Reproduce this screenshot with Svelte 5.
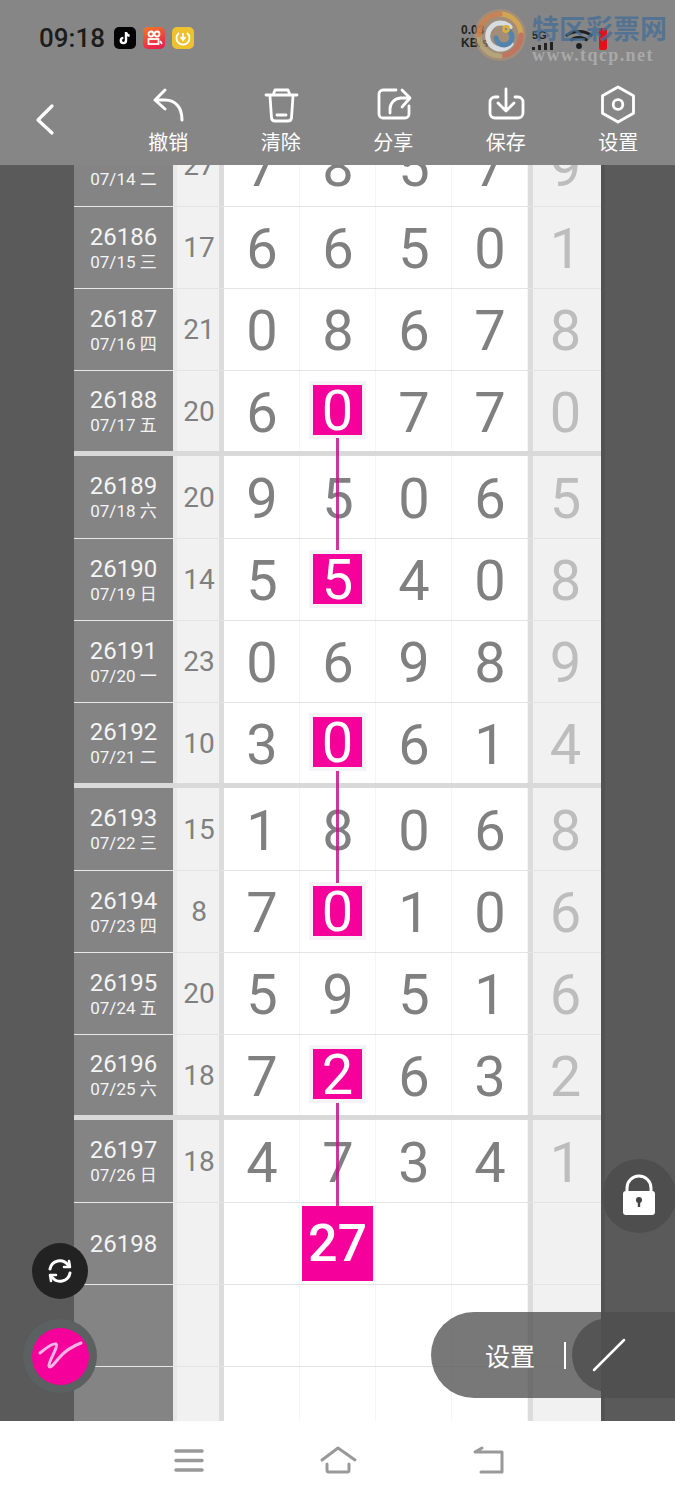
<script>
  const rows = [
    { id: '26185', date: '07/14 二', sum: '27', nums: [7, 8, 5, 7], last: 9, kind: 'first' },
    { id: '26186', date: '07/15 三', sum: '17', nums: [6, 6, 5, 0], last: 1 },
    { id: '26187', date: '07/16 四', sum: '21', nums: [0, 8, 6, 7], last: 8 },
    { id: '26188', date: '07/17 五', sum: '20', nums: [6, 0, 7, 7], last: 0, hit: true, kind: 'end' },
    { id: '26189', date: '07/18 六', sum: '20', nums: [9, 5, 0, 6], last: 5, kind: 'first' },
    { id: '26190', date: '07/19 日', sum: '14', nums: [5, 5, 4, 0], last: 8, hit: true },
    { id: '26191', date: '07/20 一', sum: '23', nums: [0, 6, 9, 8], last: 9 },
    { id: '26192', date: '07/21 二', sum: '10', nums: [3, 0, 6, 1], last: 4, hit: true, kind: 'end' },
    { id: '26193', date: '07/22 三', sum: '15', nums: [1, 8, 0, 6], last: 8, kind: 'first' },
    { id: '26194', date: '07/23 四', sum: '8', nums: [7, 0, 1, 0], last: 6, hit: true },
    { id: '26195', date: '07/24 五', sum: '20', nums: [5, 9, 5, 1], last: 6 },
    { id: '26196', date: '07/25 六', sum: '18', nums: [7, 2, 6, 3], last: 2, hit: true, kind: 'end' },
    { id: '26197', date: '07/26 日', sum: '18', nums: [4, 7, 3, 4], last: 1, kind: 'first' },
    { id: '26198', date: '', sum: '', nums: ['', '27', '', ''], last: '', big: true },
    { id: '', date: '', sum: '', nums: ['', '', '', ''], last: '' },
    { id: '', date: '', sum: '', nums: ['', '', '', ''], last: '' }
  ];
</script>

<div class="page">
  <header class="header">
    <div class="status">
      <span class="time">09:18</span>
      <span class="app tiktok">
        <svg width="16" height="16" viewBox="0 0 16 16" fill="none" stroke="#fff" stroke-width="2.400">
          <path d="M9 2v8.500a2.600 2.600 0 1 1-2.600-2.600M9 2.500c.4 2 1.700 3 3.600 3.200" />
        </svg>
      </span>
      <span class="app video">
        <svg width="18" height="18" viewBox="0 0 18 18" fill="none" stroke="#fff" stroke-width="1.800">
          <circle cx="6" cy="5" r="2.500" /><circle cx="12" cy="5" r="2.500" />
          <rect x="3.500" y="10" width="10" height="5" /><path d="M15 12l2 3" />
        </svg>
      </span>
      <span class="app clock">
        <svg width="18" height="18" viewBox="0 0 18 18" fill="none" stroke="#fff" stroke-width="1.800">
          <path d="M5 4a6.500 6.500 0 1 0 8 0M9 4v6M6.500 8 9 11l2.500-3" />
        </svg>
      </span>
      <div class="net">
        <span class="speed">0.03<br />KB/s</span>
        <span class="mobile">
          <span class="fiveg">5G</span>
          <svg width="28" height="8" viewBox="0 0 28 8" fill="#222">
            <rect x="0" y="5" width="3" height="3" /><rect x="6" y="3" width="3" height="5" />
            <rect x="12" y="1" width="3" height="7" /><rect x="18" y="0" width="3" height="8" />
          </svg>
        </span>
        <svg class="wifi" width="30" height="22" viewBox="0 0 30 22" fill="#1e1e1e" stroke="#1e1e1e" stroke-width="2.800">
          <path d="M2 8c7-6 19-6 26 0M6.500 12.500c5-4 12-4 17 0" fill="none" />
          <circle cx="15" cy="18" r="1.500" />
        </svg>
        <span class="battery"></span>
      </div>
    </div>

    <div class="toolbar">
      <button class="back" aria-label="返回">
        <svg width="24" height="36" viewBox="0 0 24 36" fill="none" stroke="#fff" stroke-width="3.200" stroke-linecap="round" stroke-linejoin="round">
          <path d="M19 4 5 18l14 13" />
        </svg>
      </button>
      <div class="tool">
        <svg width="44" height="44" viewBox="146 83 44 44" fill="none" stroke="#fff" stroke-width="3" stroke-linecap="round" stroke-linejoin="round">
          <path d="M165 90l-10 10 10 9M155 100h10c11 0 17 8 17 20" />
        </svg>
        <span>撤销</span>
      </div>
      <div class="tool">
        <svg width="44" height="44" viewBox="259 83 44 44" fill="none" stroke="#fff" stroke-width="2.800" stroke-linecap="round" stroke-linejoin="round">
          <path d="M266 95h31M273 95l2-5h13l2 5M270 96l1.500 22a3.500 3.500 0 0 0 3.500 3h13a3.500 3.500 0 0 0 3.500-3L293 96M277 115h9" />
        </svg>
        <span>清除</span>
      </div>
      <div class="tool">
        <svg width="44" height="44" viewBox="371 83 44 44" fill="none" stroke="#fff" stroke-width="2.800" stroke-linecap="round" stroke-linejoin="round">
          <path d="M396 90h-13a4 4 0 0 0-4 4v20a4 4 0 0 0 4 4h22a4 4 0 0 0 4-4v-8M390 113v-4c0-6 5-11 11-11h9M402 90l8 8-8 9" />
        </svg>
        <span>分享</span>
      </div>
      <div class="tool">
        <svg width="44" height="44" viewBox="484 83 44 44" fill="none" stroke="#fff" stroke-width="2.800" stroke-linecap="round" stroke-linejoin="round">
          <path d="M498 97h-3a5 5 0 0 0-5 5v11a5 5 0 0 0 5 5h23a5 5 0 0 0 5-5v-11a5 5 0 0 0-5-5h-3M506 89v21M498 103l8 8 8-8" />
        </svg>
        <span>保存</span>
      </div>
      <div class="tool">
        <svg width="44" height="44" viewBox="596 83 44 44" fill="none" stroke="#fff" stroke-width="2.800" stroke-linejoin="round">
          <path d="M618 87l15.500 8.800v17.500L618 122l-15.500-8.700V95.800z" />
          <circle cx="618" cy="104.500" r="4.800" />
        </svg>
        <span>设置</span>
      </div>
    </div>

    <div class="watermark">
      <span class="logo">
        <svg width="52" height="52" viewBox="0 0 52 52" fill="none" stroke-width="5" stroke-linecap="round">
          <path d="M26 5a21 21 0 0 1 21 21" stroke="#d9a94f" />
          <path d="M47 26a21 21 0 0 1-21 21" stroke="#c9735c" />
          <path d="M26 47A21 21 0 0 1 5 26" stroke="#b9a878" />
          <path d="M5 26A21 21 0 0 1 26 5" stroke="#cf8250" />
          <path d="M36 18a13 13 0 1 0 1 17" stroke="#dfe6ea" />
          <path d="M30 20a8 8 0 1 1-8 9" stroke="#4e84b0" />
          <circle cx="32" cy="20" r="1.500" stroke="#e2b33a" />
        </svg>
      </span>
      <div class="brand">
        <span class="brand-name">特区彩票网</span>
        <span class="brand-url">www.tqcp.net</span>
      </div>
    </div>
  </header>

  <main class="main">
    <div class="side side-left"></div>
    <div class="table">
      <div class="rows">
        {#each rows as row}
          <div class="row {row.kind ?? ''}">
            <div class="date-cell">
              {#if row.id}<span class="issue">{row.id}</span>{/if}
              {#if row.date}<span class="date">{row.date}</span>{/if}
            </div>
            <div class="gutter"></div>
            <div class="sum">{row.sum}</div>
            <div class="divider"></div>
            {#each row.nums as n, i}
              <div class="num">
                {#if row.big && i === 1}
                  <span class="big">{n}</span>
                {:else if row.hit && i === 1}
                  <span class="hit">{n}</span>
                {:else}
                  {n}
                {/if}
              </div>
            {/each}
            <div class="divider"></div>
            <div class="last">{row.last}</div>
          </div>
        {/each}
      </div>
      <svg class="links" width="527" height="1256" viewBox="74 165 527 1256" stroke="#c6128f" stroke-width="3" opacity="0.85">
        <line x1="337.500" y1="438" x2="337.500" y2="550" />
        <line x1="337.500" y1="771" x2="337.500" y2="883" />
        <line x1="337.500" y1="1103" x2="337.500" y2="1206" />
      </svg>
    </div>
    <div class="side side-right"></div>
  </main>

  <footer class="nav">
    <svg width="40" height="40" viewBox="167 1441 40 40" fill="none" stroke="#999" stroke-width="3.500" stroke-linecap="round">
      <path d="M175 1451h26M175 1460.500h26M175 1470h26" />
    </svg>
    <svg width="40" height="40" viewBox="317 1441 40 40" fill="none" stroke="#999" stroke-width="3" stroke-linecap="round" stroke-linejoin="round">
      <path d="M321 1460l16-12 17 12M326 1464v6a2 2 0 0 0 2 2h18a2 2 0 0 0 2-2v-6" />
    </svg>
    <svg width="40" height="40" viewBox="467 1441 40 40" fill="none" stroke="#999" stroke-width="3" stroke-linecap="round" stroke-linejoin="round">
      <path d="M474 1452h27v20h-21M474 1452l7-4" />
    </svg>
  </footer>

  <button class="float refresh" aria-label="刷新">
    <svg width="34" height="34" viewBox="0 0 34 34" fill="none" stroke="#fff" stroke-width="3" stroke-linecap="round" stroke-linejoin="round">
      <path d="M7 15a10 10 0 0 1 18-4M27 19a10 10 0 0 1-18 4" />
      <path d="M21 13h6l-1-6 M13 21H7l1 6" stroke-width="2.500" />
    </svg>
  </button>
  <button class="float pen" aria-label="画笔">
    <span class="pen-dot">
      <svg width="57" height="57" viewBox="0 0 57 57" fill="none" stroke="#f8b4e4" stroke-width="3" stroke-linecap="round" stroke-linejoin="round">
        <path d="M8 25c6-5 13-10 16-9 3 2-8 18-7 22 1 3 5-2 10-8 5-6 14-12 22-15" />
      </svg>
    </span>
  </button>
  <button class="float lock" aria-label="锁定">
    <svg width="40" height="46" viewBox="0 0 40 46">
      <path d="M8 20v-5a12 12 0 0 1 24 0v5" fill="none" stroke="#fff" stroke-width="3" />
      <rect x="4" y="18" width="32" height="24" rx="3" fill="#fff" />
      <circle cx="20" cy="27" r="3" fill="#444" />
      <rect x="18.800" y="27" width="2.400" height="7" fill="#444" />
    </svg>
  </button>
  <div class="float pill">
    <span class="pill-label">设置</span>
    <span class="pill-bar"></span>
    <span class="pill-knob">
      <svg width="36" height="36" viewBox="0 0 36 36" stroke="#fff" stroke-width="2.500" stroke-linecap="round">
        <line x1="3" y1="33" x2="33" y2="3" />
      </svg>
    </span>
  </div>
</div>

<style>
  :global(body) {
    margin: 0;
    background: #fff;
  }

  .page {
    position: relative;
    width: 675px;
    height: 1500px;
    display: flex;
    flex-direction: column;
    overflow: hidden;
    font-family: Roboto, "Noto Sans CJK SC", sans-serif;
  }

  /* header */
  .header {
    position: relative;
    flex: 0 0 165px;
    background: #868686;
  }

  .status {
    height: 75px;
    display: flex;
    align-items: center;
    padding-left: 39px;
    box-sizing: border-box;
  }

  .time {
    font-size: 26px;
    font-weight: 500;
    color: #1c1c1c;
    width: 75px;
  }

  .app {
    width: 22px;
    height: 22px;
    border-radius: 5px;
    margin-right: 7px;
    display: flex;
    align-items: center;
    justify-content: center;
  }

  .tiktok { background: #050505; }
  .video { background: linear-gradient(160deg, #ef7a2a, #ea1450); }
  .clock { background: #eec22e; }

  .net {
    position: absolute;
    left: 461px;
    top: 24px;
    width: 146px;
    height: 26px;
    display: flex;
    align-items: flex-end;
    font-family: "Liberation Sans", sans-serif;
    color: #222;
  }

  .speed {
    width: 71px;
    font-size: 12px;
    font-weight: 700;
    line-height: 13px;
  }

  .mobile {
    width: 32px;
    display: flex;
    flex-direction: column;
    gap: 1px;
  }

  .fiveg {
    font-size: 11px;
    font-weight: 700;
    line-height: 12px;
  }

  .wifi { margin-right: 5px; }

  .battery {
    width: 8px;
    height: 22px;
    background: #e3121a;
    border-radius: 2px;
  }

  .toolbar {
    height: 90px;
    display: flex;
  }

  .back {
    width: 112px;
    padding: 27px 0 0 33px;
    border: 0;
    background: none;
    text-align: left;
    box-sizing: border-box;
    align-self: flex-start;
  }

  .tool {
    width: 112.500px;
    padding-top: 8px;
    box-sizing: border-box;
    display: flex;
    flex-direction: column;
    align-items: center;
    color: #fff;
    font-size: 20px;
    line-height: 24px;
  }

  .tool span { margin-top: 4px; }

  .watermark {
    position: absolute;
    left: 474px;
    top: 9px;
    display: flex;
    align-items: flex-start;
    gap: 6px;
  }

  .logo {
    width: 52px;
    height: 52px;
    border-radius: 50%;
    background: rgba(190, 150, 110, 0.55);
    display: flex;
    opacity: 0.9;
  }

  .brand {
    display: flex;
    flex-direction: column;
    padding-top: 6px;
  }

  .brand-name {
    font-size: 27px;
    line-height: 30px;
    font-weight: 700;
    color: rgba(70, 110, 150, 0.78);
    white-space: nowrap;
  }

  .brand-url {
    font-family: "Liberation Serif", serif;
    font-size: 18px;
    line-height: 20px;
    font-weight: 700;
    letter-spacing: 1.400px;
    color: #a9a9a9;
    white-space: nowrap;
  }

  /* table */
  .main {
    flex: 0 0 1256px;
    display: flex;
    overflow: hidden;
  }

  .side {
    flex: 0 0 74px;
    background: #5a5a5a;
  }

  .side-right {
    border-left: 4px solid #535353;
    box-sizing: border-box;
  }

  .table {
    position: relative;
    flex: 0 0 527px;
    overflow: hidden;
    background: #f1f1f1;
  }

  .rows { margin-top: -41px; }

  .row {
    height: 82px;
    display: grid;
    grid-template-columns: 99px 4px 42px 5px 76px 76px 76px 76px 5px 68px;
    border-bottom: 1px solid #e4e4e4;
    box-sizing: border-box;
    background: #fff;
    color: #808080;
  }

  .row.first { height: 83px; }

  .row.end {
    height: 85px;
    border-bottom: 5px solid #d9d9d9;
  }

  .date-cell {
    background: #848484;
    color: #f4f4f4;
    display: flex;
    flex-direction: column;
    align-items: center;
    justify-content: center;
    margin-bottom: -1px;
    border-bottom: 1px solid #e8e8e8;
  }

  .row.end .date-cell {
    margin-bottom: 0;
    border-bottom: 0;
  }

  .issue {
    font-size: 24px;
    line-height: 28px;
  }

  .date {
    font-size: 17px;
    line-height: 22px;
  }

  .gutter { background: #e9e9e9; }

  .sum {
    background: #f1f1f1;
    display: flex;
    align-items: center;
    justify-content: center;
    font-size: 28px;
    padding-left: 2px;
  }

  .divider { background: #dcdcdc; }

  .num {
    display: flex;
    align-items: center;
    justify-content: center;
    padding: 3px 0 0 1px;
    font-size: 56px;
    border-right: 1px solid #f5f5f5;
  }

  .last {
    background: #f1f1f1;
    color: #bdbdbd;
    display: flex;
    align-items: center;
    justify-content: center;
    padding: 3px 3px 0 0;
    font-size: 56px;
  }

  .hit {
    width: 49px;
    height: 50px;
    box-sizing: border-box;
    padding-top: 2px;
    margin: -5px 0 0 -1px;
    background: #f5009b;
    color: #fff;
    box-shadow: 0 0 0 4px #f5f2f8;
    display: flex;
    align-items: center;
    justify-content: center;
  }

  .big {
    width: 71px;
    height: 75px;
    margin: -3px 0 0 -1px;
    background: #f5009b;
    color: #fff;
    font-size: 52px;
    font-weight: 500;
    display: flex;
    align-items: center;
    justify-content: center;
  }

  .links {
    position: absolute;
    left: 0;
    top: 0;
    pointer-events: none;
  }

  /* bottom nav */
  .nav {
    flex: 1;
    background: #fff;
    display: flex;
    justify-content: center;
    align-items: center;
    gap: 110px;
  }

  /* floating controls */
  .float {
    position: absolute;
    border: 0;
    padding: 0;
    display: flex;
    align-items: center;
    justify-content: center;
  }

  .refresh {
    left: 32px;
    top: 1243px;
    width: 56px;
    height: 56px;
    border-radius: 50%;
    background: #222;
  }

  .pen {
    left: 23px;
    top: 1319px;
    width: 74px;
    height: 74px;
    border-radius: 50%;
    background: #5b6060;
  }

  .pen-dot {
    width: 57px;
    height: 57px;
    border-radius: 50%;
    background: #f5009b;
    display: flex;
  }

  .lock {
    left: 602px;
    top: 1159px;
    width: 74px;
    height: 74px;
    border-radius: 50%;
    background: #4e4e4e;
  }

  .pill {
    left: 431px;
    top: 1312px;
    width: 244px;
    height: 86px;
    border-radius: 43px 0 0 43px;
    background: rgba(77, 77, 77, 0.76);
    justify-content: flex-start;
    color: #fff;
    font-size: 25px;
  }

  .pill-label {
    margin-left: 54px;
    width: 79px;
  }

  .pill-bar {
    width: 2px;
    height: 27px;
    background: #fff;
  }

  .pill-knob {
    width: 74px;
    height: 74px;
    margin-left: 6px;
    border-radius: 50%;
    background: rgba(80, 80, 80, 0.875);
    display: flex;
    align-items: center;
    justify-content: center;
  }
</style>
